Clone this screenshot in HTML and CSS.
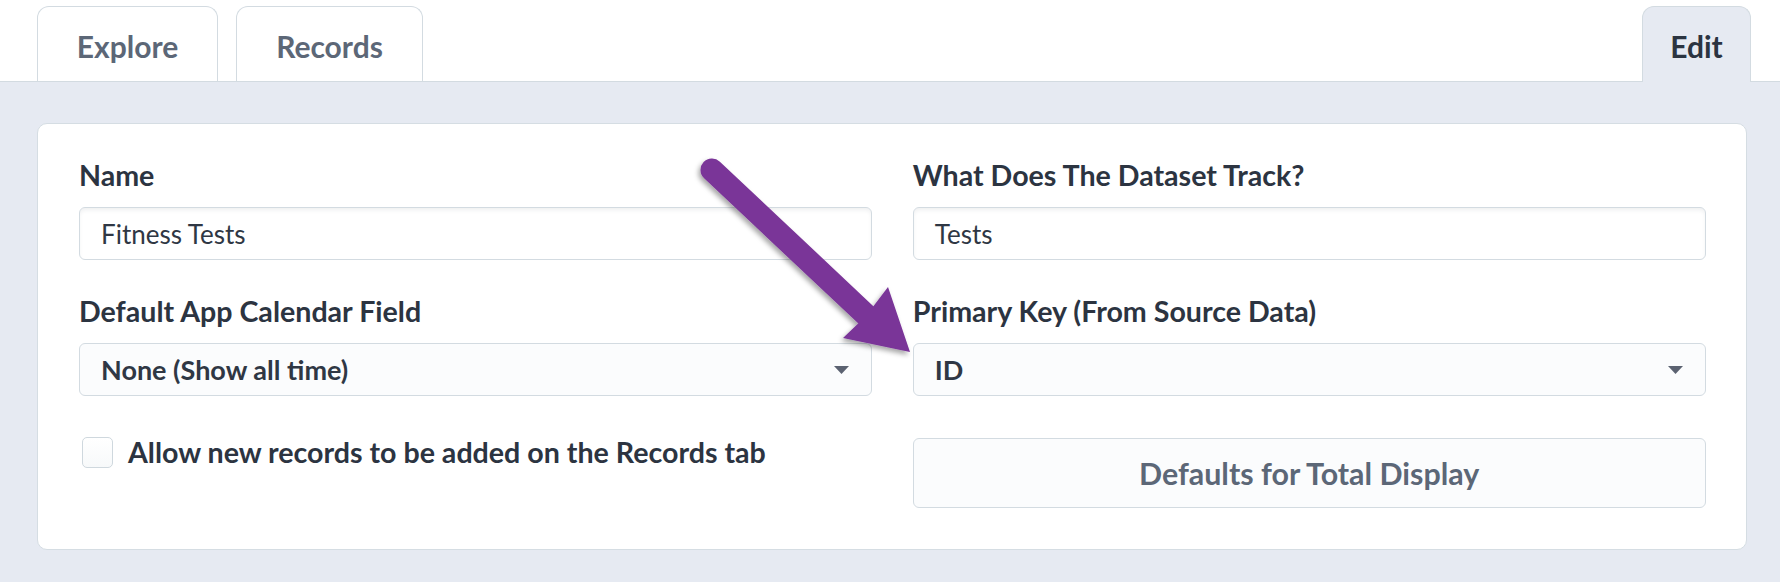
FILE: index.html
```html
<!DOCTYPE html>
<html lang="en">
<head>
<meta charset="utf-8">
<title>Edit Dataset</title>
<link rel="stylesheet" href="styles.css">
</head>
<body>
<div class="page">
  <nav class="tabbar">
    <div class="tab tab--explore">Explore</div>
    <div class="tab tab--records">Records</div>
    <div class="tab tab--active">Edit</div>
  </nav>
  <main class="content">
    <section class="card">
      <div class="col">
        <div class="field">
          <div class="field-label">Name</div>
          <div class="input">Fitness Tests</div>
        </div>
        <div class="field field--second">
          <div class="field-label">Default App Calendar Field</div>
          <div class="select">
            <span class="select-value">None (Show all time)</span>
            <svg class="caret" width="15" height="8" viewBox="0 0 15 8"><path d="M0 0H15L7.5 8Z" fill="#5b6271"/></svg>
          </div>
        </div>
        <label class="check">
          <span class="checkbox"></span>
          <span class="check-text">Allow new records to be added on the Records tab</span>
        </label>
      </div>
      <div class="col">
        <div class="field">
          <div class="field-label">What Does The Dataset Track?</div>
          <div class="input">Tests</div>
        </div>
        <div class="field field--second">
          <div class="field-label">Primary Key (From Source Data)</div>
          <div class="select">
            <span class="select-value">ID</span>
            <svg class="caret" width="15" height="8" viewBox="0 0 15 8"><path d="M0 0H15L7.5 8Z" fill="#5b6271"/></svg>
          </div>
        </div>
        <div class="button">Defaults for Total Display</div>
      </div>
    </section>
  </main>
  <svg class="annotation" width="1780" height="582" viewBox="0 0 1780 582">
    <defs>
      <filter id="shadow" x="-20%" y="-20%" width="140%" height="140%">
        <feDropShadow dx="-2" dy="3" stdDeviation="2.5" flood-color="#000" flood-opacity="0.35"/>
      </filter>
    </defs>
    <g filter="url(#shadow)" fill="#7a3598">
      <line x1="712" y1="170" x2="866" y2="315" stroke="#7a3598" stroke-width="23" stroke-linecap="round"/>
      <path d="M910 352 L843 338 L866 316 L888 287 Z"/>
    </g>
  </svg>
</div>
</body>
</html>
```

FILE: styles.css
```css
* { box-sizing: border-box; }

html, body {
  margin: 0;
  padding: 0;
}

body {
  width: 1780px;
  height: 582px;
  overflow: hidden;
  background: #e6eaf2;
  font-family: "Source Sans Pro", Lato, "Noto Sans", sans-serif;
  color: #2c3441;
}

.page {
  position: relative;
  width: 1780px;
  height: 582px;
}

.tabbar {
  display: flex;
  align-items: flex-end;
  gap: 18px;
  height: 81.5px;
  padding: 0 29px 0 37px;
  background: #ffffff;
  border-bottom: 1.5px solid #d3dbe1;
}

.tab {
  display: flex;
  align-items: center;
  justify-content: center;
  height: 75px;
  padding-top: 4px;
  background: #ffffff;
  border: 1.5px solid #d3dbe1;
  border-bottom: none;
  border-radius: 12px 12px 0 0;
  font-size: 30px;
  font-weight: 700;
  color: #5c6777;
}

.tab--explore { width: 181px; }
.tab--records { width: 187px; }

.tab--active {
  width: 109px;
  margin-left: auto;
  height: 76.5px;
  margin-bottom: -1.5px;
  background: #e6eaf2;
  color: #2b3441;
}

.content {
  padding: 41px 33px 0 37px;
}

.card {
  display: flex;
  gap: 41px;
  padding: 33.3px 40.5px 40.5px 41px;
  background: #ffffff;
  border: 1.5px solid #d5dde3;
  border-radius: 10px;
}

.col {
  flex: 1;
  display: flex;
  flex-direction: column;
}

.field-label {
  font-size: 28.6px;
  line-height: 36px;
  font-weight: 700;
  color: #2c3441;
  margin-bottom: 14.7px;
  white-space: nowrap;
}

.field--second {
  margin-top: 32.3px;
}

.input,
.select {
  display: flex;
  align-items: center;
  height: 53px;
  padding: 0 22px 0 21px;
  border: 1.5px solid #d3dbe1;
  border-radius: 6px;
  font-size: 26px;
  color: #2f3744;
}

.input {
  background: #ffffff;
  box-shadow: inset 0 3px 4px -1px rgba(40, 50, 70, 0.08);
  font-weight: 400;
}

.select {
  justify-content: space-between;
  background: #fbfcfd;
  font-size: 27px;
  font-weight: 700;
}

.caret {
  display: block;
  flex: none;
}

.check {
  display: flex;
  align-items: center;
  gap: 15px;
  margin-top: 39px;
  padding-left: 3px;
}

.checkbox {
  width: 31px;
  height: 31px;
  flex: none;
  border: 1.5px solid #cfd8de;
  border-radius: 5px;
  background: linear-gradient(#ffffff, #f7f9fa);
}

.check-text {
  font-size: 28.6px;
  font-weight: 700;
  color: #2c3441;
  white-space: nowrap;
}

.button {
  display: flex;
  align-items: center;
  justify-content: center;
  height: 70px;
  margin-top: 42px;
  background: #fbfcfd;
  border: 1.5px solid #d3dbe1;
  border-radius: 6px;
  font-size: 30.4px;
  font-weight: 700;
  color: #5c6777;
}

.annotation {
  position: absolute;
  left: 0;
  top: 0;
  pointer-events: none;
}
```
